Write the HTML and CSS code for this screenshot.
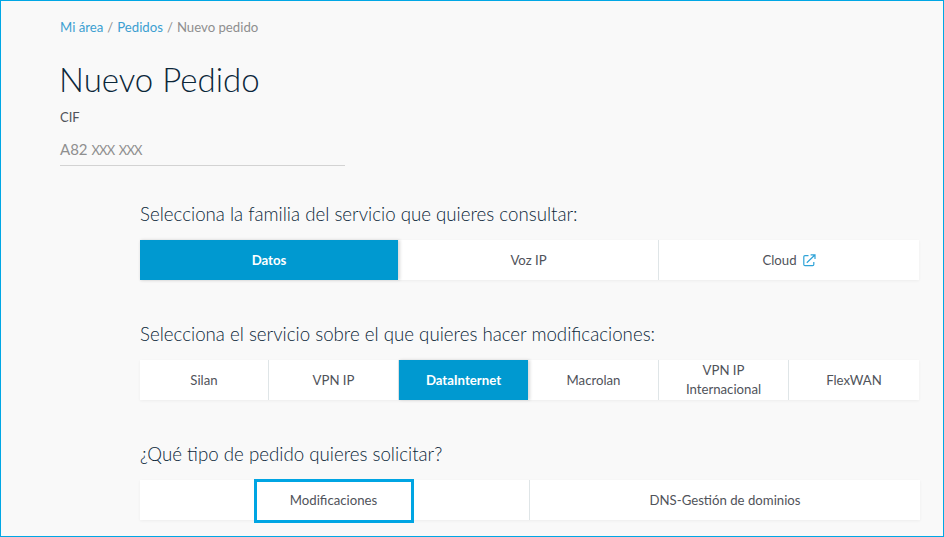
FILE: index.html
```html
<!DOCTYPE html>
<html lang="es">
<head>
<meta charset="utf-8">
<title>Nuevo Pedido</title>
<link rel="stylesheet" href="styles.css">
</head>
<body>
<div class="frame">
  <main class="page">
    <nav class="crumbs"><a>Mi área</a><span class="sep">/</span><a>Pedidos</a><span class="sep">/</span><span class="current">Nuevo pedido</span></nav>
    <h1 class="title">Nuevo Pedido</h1>
    <div class="field">
      <div class="field-label">CIF</div>
      <div class="field-input">A82 <span class="mask">XXX XXX</span></div>
    </div>
    <section class="selector first">
      <h2 class="question">Selecciona la familia del servicio que quieres consultar:</h2>
      <div class="tabs tabs-three">
        <div class="tab active">Datos</div>
        <div class="tab">Voz IP</div>
        <div class="tab">Cloud
          <svg class="ext" viewBox="0 0 13 13" width="13" height="13" fill="none" stroke="#2fa3d8" stroke-width="1.2"><path d="M5.5 1.6H2a1.2 1.2 0 0 0-1.2 1.2v7.6A1.2 1.2 0 0 0 2 11.6h7.6a1.2 1.2 0 0 0 1.2-1.2V8"/><path d="M3.8 8.8 11.6 1.2M7.6.9h4.4v4.2"/></svg>
        </div>
      </div>
    </section>
    <section class="selector">
      <h2 class="question">Selecciona el servicio sobre el que quieres hacer modificaciones:</h2>
      <div class="tabs tabs-six">
        <div class="tab">Silan</div>
        <div class="tab">VPN IP</div>
        <div class="tab active">DataInternet</div>
        <div class="tab">Macrolan</div>
        <div class="tab">VPN IP<br>Internacional</div>
        <div class="tab">FlexWAN</div>
      </div>
    </section>
    <section class="selector">
      <h2 class="question">¿Qué tipo de pedido quieres solicitar?</h2>
      <div class="tabs tabs-two">
        <div class="tab"><span class="focused">Modificaciones</span></div>
        <div class="tab">DNS-Gestión de dominios</div>
      </div>
    </section>
  </main>
</div>
</body>
</html>
```
FILE: styles.css
```css
* { box-sizing: border-box; }
html, body { margin: 0; height: 100%; overflow: hidden; }
body { font-family: "Lato", "Noto Sans", sans-serif; background: #f9f9f9; color: #50535a; }
.frame { height: 537px; border: 1px solid #00a7e5; overflow: hidden; }
.page { padding: 17px 0 0 59px; }
.crumbs { display: flex; gap: 4px; font-size: 13.2px; line-height: 18px; color: #3c9fd1; }
.sep, .current { color: #8f8f8f; }
.title { margin: 22px 0 0 -1px; font-size: 33px; line-height: 42px; font-weight: 300; color: #0b2739; }
.field { width: 285px; margin-top: 9px; }
.field-label { font-size: 13px; line-height: 16px; color: #50535a; }
.field-input { margin-top: 14px; padding-bottom: 5px; font-size: 15px; line-height: 20px; color: #8f8f8f; border-bottom: 1px solid #d3d3d3; }
.mask { font-size: 13px; letter-spacing: -.8px; word-spacing: 2px; }
.selector { margin: 42px 0 0 80px; }
.selector.first { margin-top: 36px; }
.question { margin: 0 0 14px; font-size: 18.7px; line-height: 24px; font-weight: 300; color: #0b2739; }
.tabs { display: grid; grid-auto-rows: 40px; width: max-content; background: #fff; box-shadow: 0 1px 3px rgba(0, 0, 0, .05); }
.tabs-three { grid-template-columns: 259px 260px 260px; }
.tabs-six { grid-template-columns: 129px repeat(5, 130px); }
.tabs-two { grid-template-columns: 390px 390px; }
.tab { display: flex; align-items: center; justify-content: center; gap: 6px; text-align: center; font-size: 13.2px; line-height: 19px; color: #50535a; border-right: 1px solid #dfe5e7; }
.tab:last-child { border-right: 0; }
.tab.active { background: #0099d0; background-clip: padding-box; color: #fff; font-weight: 700; border-right-color: transparent; box-shadow: 1px 0 3px rgba(0, 0, 0, .15); }
.ext { flex: none; }
.focused { display: flex; flex: none; align-items: center; justify-content: center; width: 160px; height: 44px; margin: 2px 2px 0 0; padding-bottom: 2px; background: #fff; border: 3px solid #00a5e3; }
```
